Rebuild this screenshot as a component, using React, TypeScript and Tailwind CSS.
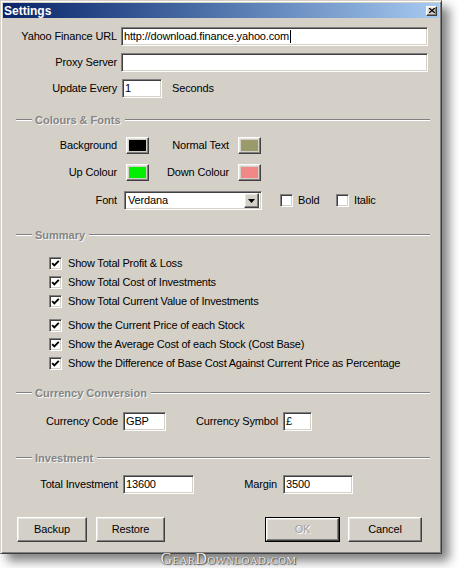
import React from "react";

const sunken =
  "bg-white border border-t-[#808080] border-l-[#808080] border-b-white border-r-white shadow-[inset_1px_1px_0_#404040,inset_-1px_-1px_0_#d4d0c8]";
const raised =
  "bg-[#d4d0c8] border border-t-white border-l-white border-b-[#404040] border-r-[#404040] shadow-[inset_-1px_-1px_0_#808080,inset_1px_1px_0_#e8e6e0]";

function Field({ w, value, caret }: { w: string; value?: string; caret?: boolean }) {
  return (
    <div className={`${sunken} ${w} h-[19px] flex items-center pl-[2px] overflow-hidden`}>
      <span className="leading-none whitespace-nowrap">{value}</span>
      {caret && <span className="inline-block w-px h-[13px] bg-black ml-px" />}
    </div>
  );
}

function Header({ title }: { title: string }) {
  return (
    <div className="flex items-center h-[12px] ml-[13px] mr-[9px]">
      <div className="w-[16px] border-t border-t-[#808080] border-b border-b-white" />
      <span className="ml-[3px] mr-[4px] font-bold tracking-normal text-[#858585] [text-shadow:1px_1px_0_#f4f4f4] whitespace-nowrap leading-none">
        {title}
      </span>
      <div className="flex-1 border-t border-t-[#808080] border-b border-b-white" />
    </div>
  );
}

function Swatch({ color }: { color: string }) {
  return (
    <div className={`${raised} w-[23px] h-[17px] p-[2px]`}>
      <div className="w-full h-full" style={{ backgroundColor: color }} />
    </div>
  );
}

function Check({ checked }: { checked?: boolean }) {
  return (
    <div className={`${sunken} w-[13px] h-[13px] flex items-center justify-center shrink-0`}>
      {checked && (
        <svg width="9" height="9" viewBox="0 0 9 9">
          <polyline points="1.2,4.2 3.3,6.4 7.8,1.8" fill="none" stroke="#000" strokeWidth="1.9" />
        </svg>
      )}
    </div>
  );
}

function CheckRow({ label }: { label: string }) {
  return (
    <div className="flex items-center h-[19px] ml-[46px]">
      <Check checked />
      <span className="ml-[6px] whitespace-nowrap tracking-[-0.2px]">{label}</span>
    </div>
  );
}

function Button({ w, ml, label, def }: { w: string; ml: string; label: string; def?: boolean }) {
  if (def) {
    return (
      <div className={`${w} ${ml} h-[25px] border border-black`}>
        <div className={`${raised} w-full h-full flex items-center justify-center`}>
          <span className="text-[#a0a0a0] [text-shadow:1px_1px_0_#ffffff]">{label}</span>
        </div>
      </div>
    );
  }
  return (
    <div className={`${raised} ${w} ${ml} h-[25px] flex items-center justify-center`}>
      <span>{label}</span>
    </div>
  );
}

export default function App() {
  return (
    <div className="relative w-[459px] h-[568px] bg-white overflow-hidden text-[11px] tracking-[-0.15px] text-black font-['Liberation_Sans',Arial,sans-serif]">
      <div className="w-[442px] h-[554px] bg-[#d4d0c8] border border-t-[#d4d0c8] border-l-[#d4d0c8] border-b-[#404040] border-r-[#404040] shadow-[inset_1px_1px_0_#ffffff,inset_-1px_-1px_0_#808080,7px_7px_10px_rgba(0,0,0,0.5)] px-[2px] pt-[2px] flex flex-col">
        {/* Title bar */}
        <div className="h-[15px] bg-linear-to-r from-[#0a246a] to-[#a6caf0] flex items-center justify-between pl-[1px] pr-[2px]">
          <span className="text-white font-bold text-[12px] tracking-normal leading-none">Settings</span>
          <div className={`${raised} w-[11px] h-[10px] flex items-center justify-center`}>
            <svg width="6" height="5" viewBox="0 0 6 5">
              <path d="M0 0 L6 5 M6 0 L0 5" stroke="#000" strokeWidth="1.3" />
            </svg>
          </div>
        </div>

        {/* URL rows */}
        <div className="flex items-center h-[19px] mt-[9px]">
          <div className="w-[114px] text-right">Yahoo Finance URL</div>
          <div className="ml-[4px]">
            <Field w="w-[307px]" value="http://download.finance.yahoo.com" caret />
          </div>
        </div>
        <div className="flex items-center h-[19px] mt-[7px]">
          <div className="w-[114px] text-right">Proxy Server</div>
          <div className="ml-[4px]">
            <Field w="w-[307px]" />
          </div>
        </div>
        <div className="flex items-center h-[19px] mt-[7px]">
          <div className="w-[114px] text-right">Update Every</div>
          <div className="ml-[5px]">
            <Field w="w-[40px]" value="1" />
          </div>
          <span className="ml-[10px]">Seconds</span>
        </div>

        {/* Colours & Fonts */}
        <div className="mt-[16px]">
          <Header title="Colours & Fonts" />
        </div>
        <div className="flex items-center h-[17px] mt-[11px]">
          <div className="w-[114px] text-right">Background</div>
          <div className="ml-[9px]">
            <Swatch color="#000000" />
          </div>
          <div className="w-[80px] text-right">Normal Text</div>
          <div className="ml-[9px]">
            <Swatch color="#9a9a6a" />
          </div>
        </div>
        <div className="flex items-center h-[17px] mt-[10px]">
          <div className="w-[114px] text-right">Up Colour</div>
          <div className="ml-[9px]">
            <Swatch color="#00f000" />
          </div>
          <div className="w-[80px] text-right">Down Colour</div>
          <div className="ml-[9px]">
            <Swatch color="#f08888" />
          </div>
        </div>
        <div className="flex items-center h-[19px] mt-[10px]">
          <div className="w-[114px] text-right">Font</div>
          <div className={`${sunken} ml-[7px] w-[138px] h-[19px] flex items-center justify-between pl-[3px] pr-[2px]`}>
            <span>Verdana</span>
            <div className={`${raised} w-[15px] h-[15px] flex items-center justify-center`}>
              <svg width="7" height="4" viewBox="0 0 7 4">
                <path d="M0 0 H7 L3.5 4 Z" fill="#000" />
              </svg>
            </div>
          </div>
          <div className="ml-[18px]">
            <Check />
          </div>
          <div className="ml-[5px] w-[38px]">Bold</div>
          <Check />
          <div className="ml-[5px]">Italic</div>
        </div>

        {/* Summary */}
        <div className="mt-[19px]">
          <Header title="Summary" />
        </div>
        <div className="mt-[13px] flex flex-col">
          <CheckRow label="Show Total Profit & Loss" />
          <CheckRow label="Show Total Cost of Investments" />
          <CheckRow label="Show Total Current Value of Investments" />
        </div>
        <div className="mt-[5px] flex flex-col">
          <CheckRow label="Show the Current Price of each Stock" />
          <CheckRow label="Show the Average Cost of each Stock (Cost Base)" />
          <CheckRow label="Show the Difference of Base Cost Against Current Price as Percentage" />
        </div>

        {/* Currency */}
        <div className="mt-[14px]">
          <Header title="Currency Conversion" />
        </div>
        <div className="flex items-center h-[19px] mt-[13px]">
          <div className="w-[115px] text-right">Currency Code</div>
          <div className="ml-[5px]">
            <Field w="w-[43px]" value="GBP" />
          </div>
          <div className="w-[112px] text-right">Currency Symbol</div>
          <div className="ml-[5px]">
            <Field w="w-[29px]" value="£" />
          </div>
        </div>

        {/* Investment */}
        <div className="mt-[21px]">
          <Header title="Investment" />
        </div>
        <div className="flex items-center h-[19px] mt-[11px]">
          <div className="w-[115px] text-right">Total Investment</div>
          <div className="ml-[5px]">
            <Field w="w-[71px]" value="13600" />
          </div>
          <div className="w-[83px] text-right">Margin</div>
          <div className="ml-[6px]">
            <Field w="w-[70px]" value="3500" />
          </div>
        </div>

        {/* Buttons */}
        <div className="flex items-center mt-[23px]">
          <Button w="w-[70px]" ml="ml-[14px]" label="Backup" />
          <Button w="w-[69px]" ml="ml-[9px]" label="Restore" />
          <Button w="w-[75px]" ml="ml-[100px]" label="OK" def />
          <Button w="w-[74px]" ml="ml-[8px]" label="Cancel" />
        </div>
      </div>

      {/* Watermark */}
      <div className="absolute left-0 right-[2px] top-[551px] flex justify-center pointer-events-none">
        <span className="font-['Liberation_Serif',serif] text-[16px] leading-none [font-variant:small-caps] tracking-[0.3px] text-[#eeeeee] [text-shadow:0_0_1px_#303030,1px_1px_1px_#505050]">
          GearDownload.com
        </span>
      </div>
    </div>
  );
}
